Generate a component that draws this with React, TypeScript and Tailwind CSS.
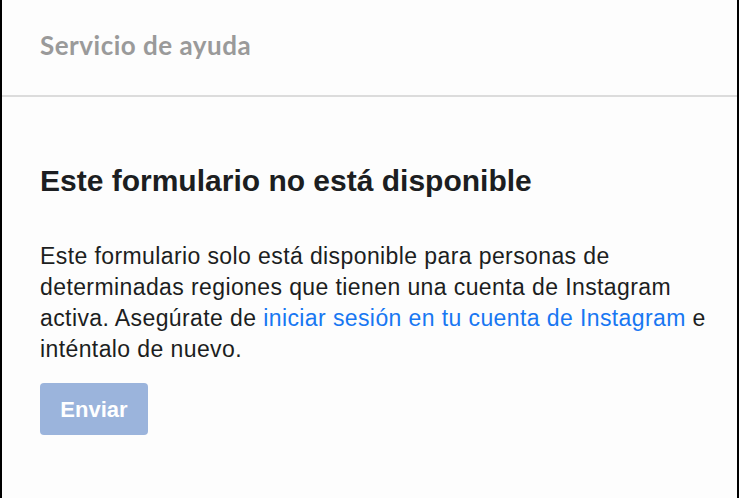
export default function App() {
  return (
    <div className="h-[498px] w-[739px] overflow-hidden border-x-2 border-black bg-[#fdfdfd] flex flex-col">
      {/* Header */}
      <header className="h-[97px] shrink-0 border-b-2 border-[#dcdcdc] px-[38px] pt-[29px]">
        <h2 className="text-[26px] font-bold leading-[32px] tracking-[0.5px] text-[#9a9a9a] font-['Lato','Noto_Sans',sans-serif]">
          Servicio de ayuda
        </h2>
      </header>

      {/* Content */}
      <main className="flex-1 px-[38px] pt-[66px] font-['Liberation_Sans','Helvetica',sans-serif]">
        <h1 className="text-[30px] font-bold leading-[36px] text-[#1c1e21]">
          Este formulario no está disponible
        </h1>
        <p className="mt-[42px] w-[672px] text-[23px] leading-[31px] tracking-[0.4px] text-[#1c1e21]">
          Este formulario solo está disponible para personas de determinadas regiones que tienen una cuenta de Instagram
          activa. Asegúrate de{' '}
          <a href="#" className="text-[#1877f2]">
            iniciar sesión en tu cuenta de Instagram
          </a>{' '}
          e inténtalo de nuevo.
        </p>
        <button
          disabled
          className="mt-[18px] h-[52px] w-[108px] rounded-[4px] bg-[#9bb4dc] text-[22px] font-bold text-white"
        >
          Enviar
        </button>
      </main>
    </div>
  );
}
